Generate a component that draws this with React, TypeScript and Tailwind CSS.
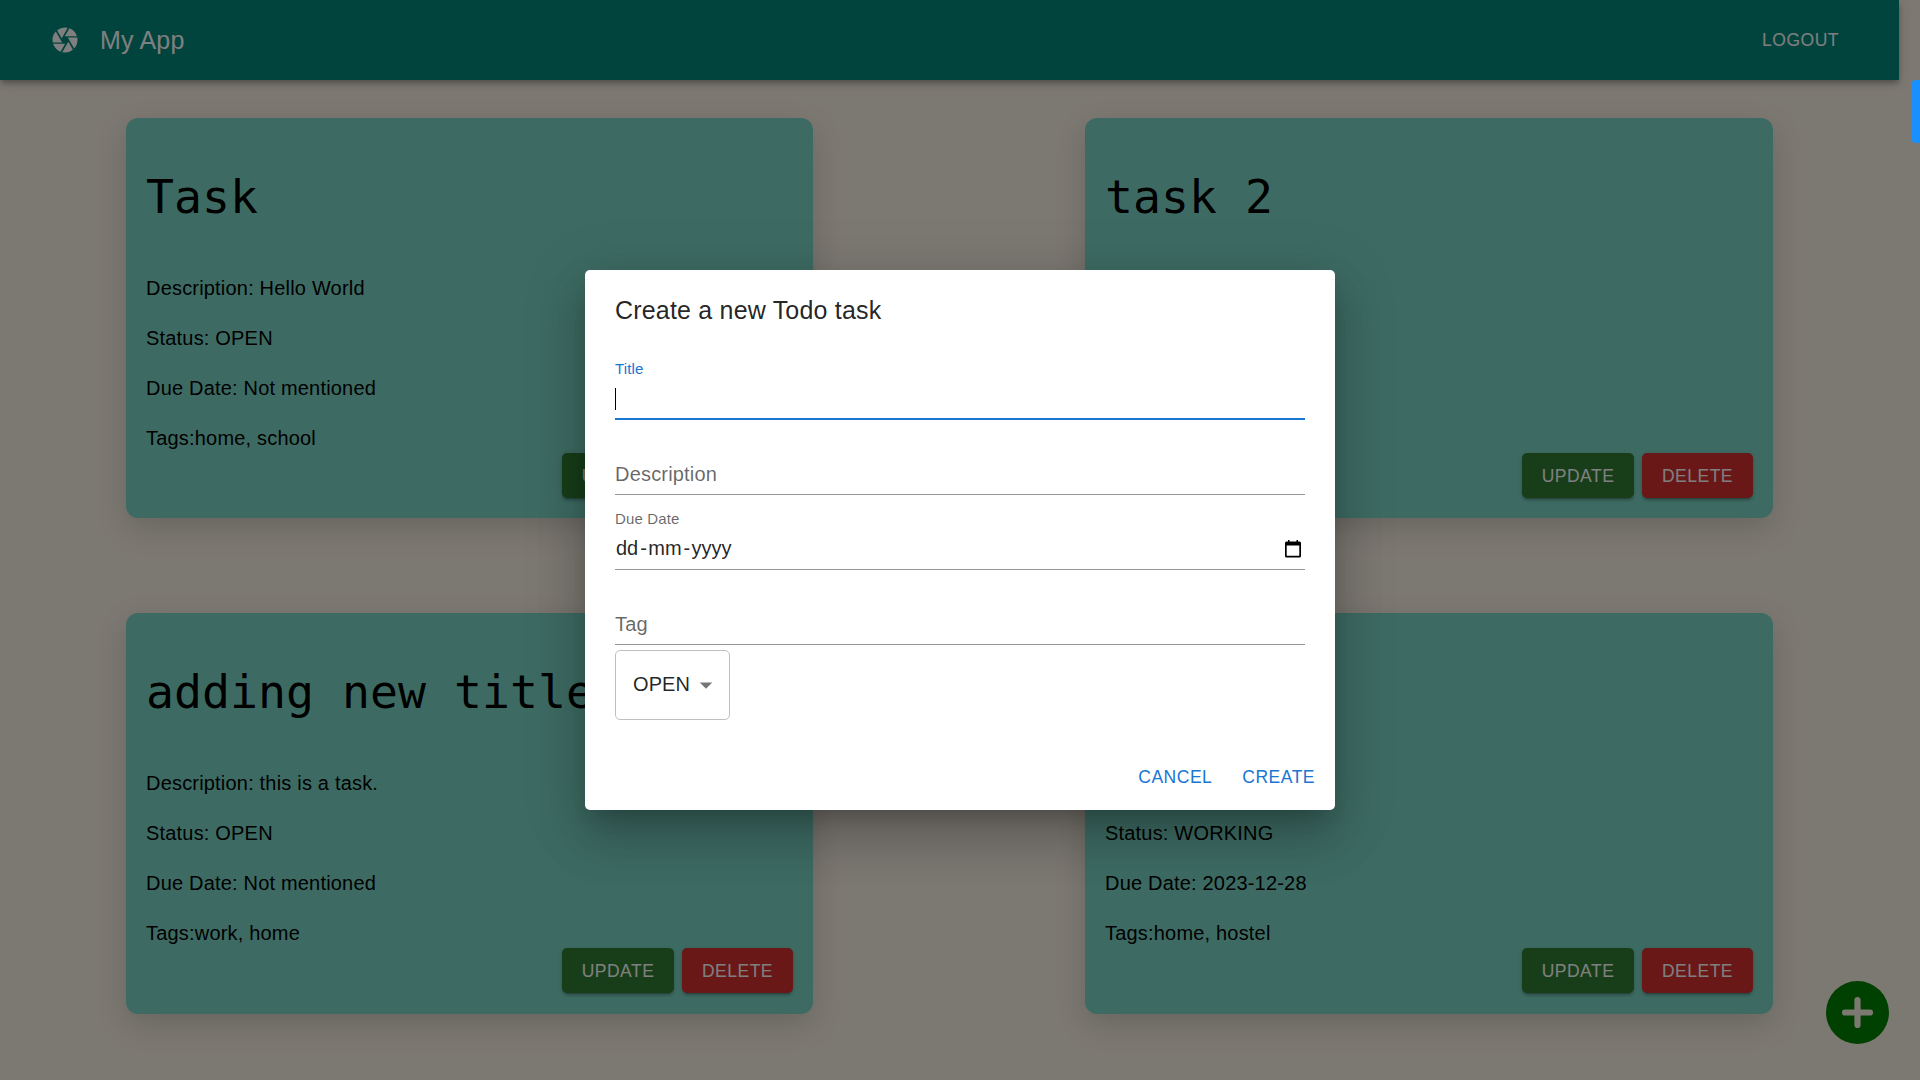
import { MdCamera, MdArrowDropDown } from "react-icons/md";

type Task = { title: string; lines: string[] };

const tasks: Task[] = [
  {
    title: "Task",
    lines: ["Description: Hello World", "Status: OPEN", "Due Date: Not mentioned", "Tags:home, school"],
  },
  {
    title: "task 2",
    lines: ["", "", "", ""],
  },
  {
    title: "adding new title",
    lines: ["Description: this is a task.", "Status: OPEN", "Due Date: Not mentioned", "Tags:work, home"],
  },
  {
    title: "",
    lines: ["", "Status: WORKING", "Due Date: 2023-12-28", "Tags:home, hostel"],
  },
];

const buttonShadow =
  "shadow-[0_4px_1px_-3px_rgba(0,0,0,0.2),0_2.5px_2.5px_0_rgba(0,0,0,0.14),0_1px_6px_0_rgba(0,0,0,0.12)]";

function TaskCard({ title, lines }: Task) {
  return (
    <article className="flex flex-col rounded-[12px] bg-[#7bd7c6] p-5 text-black shadow-[0_10px_30px_rgba(0,0,0,0.16)]">
      <h1 className="mt-[29px] mb-[36px] h-[60px] font-['DejaVu_Sans_Mono',monospace] text-[46.5px] leading-[60px] whitespace-nowrap">
        {title}
      </h1>
      {lines.map((line, i) => (
        <p key={i} className="h-[50px] text-[20px] leading-[50px] tracking-[0.19px]">
          {line}
        </p>
      ))}
      <div className="-mt-[10px] flex justify-end gap-2 text-[17.5px] leading-[30px] tracking-[0.5px] text-white">
        <button className={`h-[45px] w-[112px] rounded-[5px] bg-[#2e7d32] ${buttonShadow}`}>UPDATE</button>
        <button className={`h-[45px] w-[111px] rounded-[5px] bg-[#d32f2f] ${buttonShadow}`}>DELETE</button>
      </div>
    </article>
  );
}

function CalendarIcon() {
  return (
    <svg className="mt-px mr-[3px] h-[18px] w-[18px]" viewBox="0 0 18 18">
      <path
        fill="#000"
        fillRule="evenodd"
        d="M4 0h1.500v1.500h7V0H14v1.500h1.500q1.500 0 1.500 1.500v13q0 1.500-1.500 1.500h-13Q1 17.500 1 16V3q0-1.500 1.500-1.500H4zM2.700 5.500v10.300h12.600V5.500z"
      />
    </svg>
  );
}

function Dialog() {
  return (
    <section className="flex h-[540px] w-[750px] flex-col rounded-[5px] bg-white text-black/87 shadow-[0_14px_19px_-9px_rgba(0,0,0,0.2),0_30px_47.5px_4px_rgba(0,0,0,0.14),0_11px_57.5px_10px_rgba(0,0,0,0.12)]">
      <h2 className="px-[30px] py-5 text-[25px] leading-10 tracking-[0.19px]">Create a new Todo task</h2>
      <div className="flex flex-col px-[30px]">
        <div className="mt-[10px] mb-[5px] flex h-[60px] flex-col border-b-2 border-[#1976d2]">
          <label className="h-[17px] text-[15px] leading-[17px] tracking-[0.14px] text-[#1976d2]">Title</label>
          <span className="mt-[11px] h-[22px] w-px bg-black" />
        </div>
        <div className="mt-[10px] mb-[5px] flex h-[60px] items-end border-b border-[#949494] text-black/60">
          <span className="text-[20px] leading-[40px] tracking-[0.19px]">Description</span>
        </div>
        <div className="mt-[10px] mb-[5px] flex h-[60px] flex-col border-b border-[#949494]">
          <label className="h-[17px] text-[15px] leading-[17px] tracking-[0.14px] text-black/60">Due Date</label>
          <div className="flex h-[42px] items-center justify-between">
            <span className="flex pl-px text-[20px] leading-[23px]">
              <span>dd</span>
              <span className="w-[10px] pl-[2px]">-</span>
              <span>mm</span>
              <span className="w-[10px] pl-[2px]">-</span>
              <span>yyyy</span>
            </span>
            <CalendarIcon />
          </div>
        </div>
        <div className="mt-[10px] mb-[5px] flex h-[60px] items-end border-b border-[#949494] text-black/60">
          <span className="text-[20px] leading-[40px] tracking-[0.19px]">Tag</span>
        </div>
        <div className="flex h-[70px] w-[115px] items-center rounded-[5px] border border-[#c0c0c0] pb-[2px] pl-[17px]">
          <span className="w-[58px] text-[20px] leading-[29px] tracking-[0.1px]">OPEN</span>
          <MdArrowDropDown className="mt-[2px] h-[30px] w-[30px] shrink-0 text-black/54" />
        </div>
      </div>
      <div className="mt-auto flex justify-end gap-[10px] p-[10px] text-[17.5px] leading-[31px] tracking-[0.5px] text-[#1976d2]">
        <button className="px-[10px] py-[7.5px]">CANCEL</button>
        <button className="px-[10px] py-[7.5px]">CREATE</button>
      </div>
    </section>
  );
}

export default function App() {
  return (
    <div className="relative h-[1080px] w-[1920px] overflow-hidden bg-[#f9f1e4] font-['Liberation_Sans',Arial,sans-serif]">
      <header className="relative flex h-20 w-[1899px] items-center bg-[#00897b] pr-[60px] pl-[50px] text-white shadow-[0_2.5px_5px_-1px_rgba(0,0,0,0.2),0_5px_6px_0_rgba(0,0,0,0.14),0_1px_12.5px_0_rgba(0,0,0,0.12)]">
        <MdCamera className="h-[30px] w-[30px]" />
        <span className="ml-[20px] text-[25px] leading-10 tracking-[0.19px]">My App</span>
        <button className="ml-auto text-[17.5px] tracking-[0.5px]">LOGOUT</button>
      </header>
      <main className="grid w-[1899px] grid-cols-[687px_688px] grid-rows-[400px_401px] gap-x-[272px] gap-y-[95px] pt-[38px] pl-[126px]">
        {tasks.map((t, i) => (
          <TaskCard key={i} {...t} />
        ))}
      </main>
      <svg className="absolute top-[981px] left-[1826px] h-[63px] w-[63px]" viewBox="0 0 63 63">
        <circle cx="31.500" cy="31.500" r="31.500" fill="#008000" />
        <path d="M31.500 19v25M19 31.500h25" stroke="#f9f1e4" strokeWidth="6.200" strokeLinecap="round" />
      </svg>
      <div className="absolute inset-0 flex items-center justify-center bg-black/50">
        <Dialog />
      </div>
      <div className="absolute top-20 left-[1911px] h-[63px] w-[20px] rounded-[5px] bg-[#1890ff]" />
    </div>
  );
}
